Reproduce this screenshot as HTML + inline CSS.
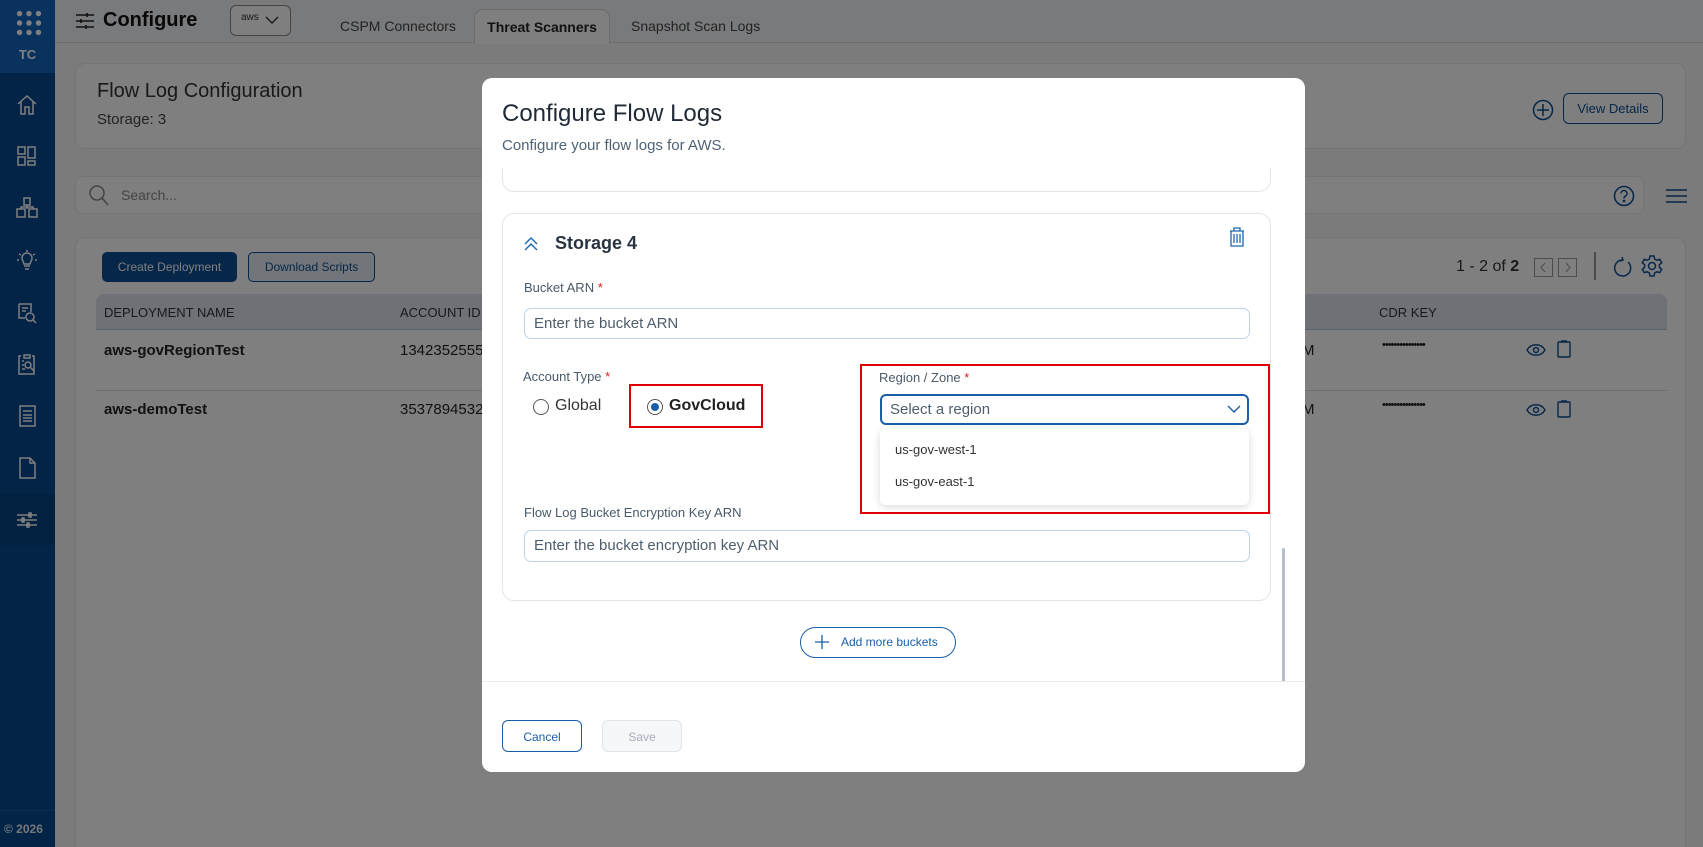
<!DOCTYPE html>
<html><head><meta charset="utf-8"><style>
*{box-sizing:border-box;margin:0;padding:0}
html,body{width:1703px;height:847px;overflow:hidden}
body{font-family:"Liberation Sans",Arial,sans-serif;background:#f6f7f9;position:relative;color:#222}
.abs{position:absolute}
.side{left:0;top:0;width:55px;height:847px;background:#06488f}
.side .top{position:absolute;left:0;top:0;width:55px;height:73px;background:#1464be}
.side .act{position:absolute;left:0;top:494px;width:55px;height:51px;background:#04407e}
.side .foot{position:absolute;left:0;top:810px;width:55px;height:37px;border-top:1px solid #1a5aa0;color:#e8eef6;font-size:12px;font-weight:bold;padding:11px 0 0 4px}
.ico{position:absolute;left:14px;width:26px;height:26px}
.topbar{left:55px;top:0;width:1648px;height:43px;background:#f3f5f8;border-bottom:1px solid #d8dde4}
.card{background:#fff;border:1px solid #e5e8ec;border-radius:10px}
.tab{position:absolute;top:9px;height:35px;font-size:14px;color:#444;padding-top:9px}
.btnp{position:absolute;border-radius:5px;font-size:12px;text-align:center}
.ov{left:0;top:0;width:1703px;height:847px;background:rgba(0,0,0,.5)}
.modal{left:482px;top:78px;width:823px;height:694px;background:#fff;border-radius:10px;overflow:hidden}
.lbl{position:absolute;font-size:13px;color:#4a5a6a}
.req{color:#d21;}
.inp{position:absolute;border:1px solid #bcd3ea;border-radius:7px;font-size:15px;color:#4f5d6c;padding:6px 0 0 9px}
</style></head><body>

<div class="abs side">
 <div class="top"></div>
 <svg class="ico" style="top:10px;left:16px" width="22" height="22" viewBox="0 0 22 22" fill="#fff"><circle cx="3" cy="3" r="2.3"/><circle cx="11" cy="3" r="2.3"/><circle cx="19" cy="3" r="2.3"/><circle cx="3" cy="11" r="2.3"/><circle cx="11" cy="11" r="2.3"/><circle cx="19" cy="11" r="2.3"/><circle cx="3" cy="19" r="2.3"/><circle cx="11" cy="19" r="2.3"/><circle cx="19" cy="19" r="2.3"/></svg>
 <div style="position:absolute;top:47px;left:0;width:55px;text-align:center;color:#fff;font-weight:bold;font-size:13px">TC</div>
 <div class="act"></div>
 <svg class="ico" style="top:92px" viewBox="0 0 26 26" fill="none" stroke="#fff" stroke-width="1.5"><path d="M4 12L13 4l9 8M7 10v12h4v-7h4v7h4V10"/></svg>
 <svg class="ico" style="top:143px" viewBox="0 0 26 26" fill="none" stroke="#fff" stroke-width="1.5"><rect x="4" y="4" width="7" height="7"/><rect x="4" y="14" width="7" height="8"/><rect x="14" y="4" width="7" height="11"/><rect x="14" y="18" width="7" height="4"/></svg>
 <svg class="ico" style="top:195px" viewBox="0 0 26 26" fill="none" stroke="#fff" stroke-width="1.5"><rect x="10" y="3" width="6" height="7"/><rect x="3" y="14" width="8" height="8"/><rect x="15" y="14" width="8" height="8"/><path d="M13 10v4M7 14v-2h12v2"/></svg>
 <svg class="ico" style="top:247px" viewBox="0 0 26 26" fill="none" stroke="#fff" stroke-width="1.5"><path d="M9 14a5 5 0 1 1 8 0l-1 3h-6zM10 19h6M11 22h4M13 3v2M5 7l2 1M21 7l-2 1M3 13h2M21 13h2"/></svg>
 <svg class="ico" style="top:300px" viewBox="0 0 26 26" fill="none" stroke="#fff" stroke-width="1.5"><path d="M5 4h12v8M5 4v14h6M8 8h6M8 11h4"/><circle cx="16" cy="17" r="4"/><path d="M19 20l3 3"/></svg>
 <svg class="ico" style="top:351px" viewBox="0 0 26 26" fill="none" stroke="#fff" stroke-width="1.5"><path d="M10 4h6v3h-6zM7 5H5v18h15V5h-2"/><circle cx="14" cy="14" r="3"/><path d="M16 16l4 4M8 10h2M8 14h2M8 18h3"/></svg>
 <svg class="ico" style="top:403px" viewBox="0 0 26 26" fill="none" stroke="#fff" stroke-width="1.5"><rect x="6" y="3" width="15" height="20"/><path d="M9 8h9M9 12h9M9 15h9M9 18h9"/></svg>
 <svg class="ico" style="top:455px" viewBox="0 0 26 26" fill="none" stroke="#fff" stroke-width="1.5"><path d="M6 3h10l5 5v15H6zM16 3v5h5"/></svg>
 <svg class="ico" style="top:507px" viewBox="0 0 26 26" fill="none" stroke="#fff" stroke-width="1.5"><path d="M3 8h20M3 13h20M3 18h20"/><rect x="15" y="6" width="2" height="4" fill="#fff"/><rect x="8" y="11" width="2" height="4" fill="#fff"/><rect x="13" y="16" width="2" height="4" fill="#fff"/></svg>
 <div class="foot">© 2026</div>
</div>

<div class="abs topbar">
 <svg style="position:absolute;left:20px;top:12px" width="20" height="18" viewBox="0 0 20 18" fill="none" stroke="#222" stroke-width="1.6"><path d="M1 3h18M1 9h18M1 15h18"/><path d="M12 1v4M6 7v4M11 13v4"/></svg>
 <div style="position:absolute;left:48px;top:9px;font-size:20px;font-weight:bold;color:#111">Configure</div>
 <div style="position:absolute;left:175px;top:5px;width:61px;height:31px;border:1px solid #888;border-radius:6px;background:#fff"><span style="position:absolute;left:10px;top:6px;font-size:10px;color:#333">aws</span><svg style="position:absolute;left:34px;top:9px" width="14" height="10" viewBox="0 0 14 10" fill="none" stroke="#333" stroke-width="1.4"><path d="M1 2l6 6 6-6"/></svg></div>
 <div class="tab" style="left:285px">CSPM Connectors</div>
 <div class="tab" style="left:419px;width:136px;background:#fff;border:1px solid #d5dae1;border-bottom:none;border-radius:9px 9px 0 0;text-align:center;font-weight:bold;color:#222">Threat Scanners</div>
 <div class="tab" style="left:576px">Snapshot Scan Logs</div>
</div>

<div class="abs card" style="left:75px;top:63px;width:1611px;height:86px">
 <div style="position:absolute;left:21px;top:16px;font-size:20px;color:#333">Flow Log Configuration</div>
 <div style="position:absolute;left:21px;top:47px;font-size:15px;color:#444">Storage: 3</div>
 <svg style="position:absolute;left:1456px;top:35px" width="22" height="22" viewBox="0 0 22 22" fill="none" stroke="#0d4f93" stroke-width="1.5"><circle cx="11" cy="11" r="9.5"/><path d="M11 5v12M5 11h12"/></svg>
 <div style="position:absolute;left:1487px;top:29px;width:100px;height:31px;border:1.5px solid #0d4f93;border-radius:6px;font-size:13px;color:#0d4f93;text-align:center;padding-top:7px">View Details</div>
</div>

<div class="abs card" style="left:75px;top:176px;width:1569px;height:38px;border-radius:8px">
 <svg style="position:absolute;left:13px;top:8px" width="20" height="22" viewBox="0 0 20 22" fill="none" stroke="#888" stroke-width="1.5"><circle cx="8" cy="8" r="7"/><path d="M13 13l6 7"/></svg>
 <div style="position:absolute;left:45px;top:10px;font-size:14px;color:#888">Search...</div>
 <svg style="position:absolute;left:1537px;top:8px" width="22" height="22" viewBox="0 0 22 22" fill="none" stroke="#0d4f93" stroke-width="1.5"><circle cx="11" cy="11" r="9.5"/><path d="M8 8.5a3 3 0 1 1 4 2.8c-1 .4-1 1.2-1 2.2"/><circle cx="11" cy="16" r=".6" fill="#0d4f93"/></svg>
</div>
<svg class="abs" style="left:1666px;top:189px" width="21" height="14" viewBox="0 0 21 14" stroke="#0d4f93" stroke-width="1.5"><path d="M0 1h21M0 7h21M0 13h21"/></svg>

<div class="abs card" style="left:75px;top:237px;width:1611px;height:630px">
 <div class="btnp" style="left:26px;top:14px;width:135px;height:30px;background:#0d4f93;color:#fff;padding-top:8px">Create Deployment</div>
 <div class="btnp" style="left:172px;top:14px;width:127px;height:30px;background:#e4eaf2;border:1px solid #0d4f93;color:#0d4f93;padding-top:7px">Download Scripts</div>
 <div style="position:absolute;left:1380px;top:20px;font-size:16px;color:#333">1 - 2 of <b>2</b></div>
 <svg style="position:absolute;left:1458px;top:20px" width="44" height="20" viewBox="0 0 44 20" fill="none" stroke="#999" stroke-width="1"><rect x=".5" y=".5" width="18" height="18"/><rect x="24.5" y=".5" width="18" height="18"/><path d="M11 5l-4 4.5 4 4.5M32 5l4 4.5-4 4.5"/></svg>
 <div style="position:absolute;left:1518px;top:14px;width:2px;height:28px;background:#999"></div>
 <svg style="position:absolute;left:1537px;top:18px" width="20" height="22" viewBox="0 0 20 22" fill="none" stroke="#0d4f93" stroke-width="1.5"><path d="M15 6a8 8 0 1 1-6-2M9 1l1 3-3 1"/></svg>
 <svg style="position:absolute;left:1565px;top:17px" width="22" height="22" viewBox="0 0 22 22" fill="none" stroke="#0d4f93" stroke-width="1.5"><circle cx="11" cy="11" r="3.5"/><path d="M9 1h4l.6 3 2.3 1.3 2.8-1 2 3.4-2.3 2v2.6l2.3 2-2 3.4-2.8-1-2.3 1.3L13 21H9l-.6-3-2.3-1.3-2.8 1-2-3.4 2.3-2V9.7L1.3 7.7l2-3.4 2.8 1L8.4 4z"/></svg>
 <div style="position:absolute;left:20px;top:56px;width:1571px;height:36px;background:#dce3ec;border-radius:8px 8px 0 0;border-bottom:1px solid #b9c6d5;font-size:13px;color:#333">
  <span style="position:absolute;left:8px;top:11px">DEPLOYMENT NAME</span><span style="position:absolute;left:304px;top:11px">ACCOUNT ID</span><span style="position:absolute;left:1283px;top:11px">CDR KEY</span>
 </div>
 <div style="position:absolute;left:20px;top:152px;width:1571px;height:1px;background:#ddd"></div>
 <div style="position:absolute;left:28px;top:104px;font-size:15px;font-weight:bold">aws-govRegionTest</div>
 <div style="position:absolute;left:324px;top:104px;font-size:15px">1342352555</div>
 <div style="position:absolute;left:28px;top:163px;font-size:15px;font-weight:bold">aws-demoTest</div>
 <div style="position:absolute;left:324px;top:163px;font-size:15px">3537894532</div>
 <div style="position:absolute;left:1226px;top:104px;font-size:15px">M</div>
 <div style="position:absolute;left:1226px;top:163px;font-size:15px">M</div>
 <div style="position:absolute;left:1306px;top:101px;font-size:11px;letter-spacing:-1px">•••••••••••••••</div>
 <div style="position:absolute;left:1306px;top:161px;font-size:11px;letter-spacing:-1px">•••••••••••••••</div>
 <svg style="position:absolute;left:1450px;top:105px" width="20" height="14" viewBox="0 0 20 14" fill="none" stroke="#0d4f93" stroke-width="1.4"><path d="M1 7c4-7 14-7 18 0-4 7-14 7-18 0z"/><circle cx="10" cy="7" r="2.5"/></svg>
 <svg style="position:absolute;left:1481px;top:102px" width="14" height="18" viewBox="0 0 14 18" fill="none" stroke="#0d4f93" stroke-width="1.4"><rect x="1" y="2" width="12" height="15" rx="1"/><path d="M4 1h6"/></svg>
 <svg style="position:absolute;left:1450px;top:165px" width="20" height="14" viewBox="0 0 20 14" fill="none" stroke="#0d4f93" stroke-width="1.4"><path d="M1 7c4-7 14-7 18 0-4 7-14 7-18 0z"/><circle cx="10" cy="7" r="2.5"/></svg>
 <svg style="position:absolute;left:1481px;top:162px" width="14" height="18" viewBox="0 0 14 18" fill="none" stroke="#0d4f93" stroke-width="1.4"><rect x="1" y="2" width="12" height="15" rx="1"/><path d="M4 1h6"/></svg>
</div>

<div class="abs ov"></div>

<div class="abs modal">
 <div style="position:absolute;left:20px;top:22px;font-size:24px;color:#1f2a36">Configure Flow Logs</div>
 <div style="position:absolute;left:20px;top:59px;font-size:15px;color:#4f6274">Configure your flow logs for AWS.</div>
 <div style="position:absolute;left:20px;top:90px;width:769px;height:24px;border:1px solid #e1e5ea;border-top:none;border-radius:0 0 12px 12px"></div>
 <div style="position:absolute;left:20px;top:135px;width:769px;height:388px;border:1px solid #e1e5ea;border-radius:12px">
  <svg style="position:absolute;left:20px;top:22px" width="16" height="16" viewBox="0 0 16 16" fill="none" stroke="#1a67b8" stroke-width="1.4"><path d="M2 8l6-6 6 6M2 14l6-6 6 6"/></svg>
  <div style="position:absolute;left:52px;top:19px;font-size:18px;font-weight:bold;color:#2a3440">Storage 4</div>
  <svg style="position:absolute;left:726px;top:13px" width="16" height="20" viewBox="0 0 16 20" fill="none" stroke="#1a67b8" stroke-width="1.3"><path d="M1 4h14M5 4V1h6v3M2 4v15h12V4M5 7v9M8 7v9M11 7v9"/></svg>
  <div class="lbl" style="left:21px;top:66px">Bucket ARN <span class="req">*</span></div>
  <div class="inp" style="left:21px;top:94px;width:726px;height:31px">Enter the bucket ARN</div>
  <div class="lbl" style="left:20px;top:155px">Account Type <span class="req">*</span></div>
  <div style="position:absolute;left:30px;top:185px;width:16px;height:16px;border:1.3px solid #555;border-radius:50%"></div>
  <div style="position:absolute;left:52px;top:183px;font-size:16px;color:#333">Global</div>
  <div style="position:absolute;left:126px;top:170px;width:134px;height:44px;border:2px solid #e00000"></div>
  <div style="position:absolute;left:144px;top:185px;width:16px;height:16px;border:1.3px solid #555;border-radius:50%"><div style="position:absolute;left:3px;top:3px;width:8px;height:8px;border-radius:50%;background:#1a5ea8"></div></div>
  <div style="position:absolute;left:166px;top:183px;font-size:16px;font-weight:bold;color:#222">GovCloud</div>
  <div class="lbl" style="left:21px;top:291px">Flow Log Bucket Encryption Key ARN</div>
  <div class="inp" style="left:21px;top:316px;width:726px;height:32px">Enter the bucket encryption key ARN</div>
 </div>
 <div style="position:absolute;left:378px;top:286px;width:410px;height:150px;border:2px solid #e00000"></div>
 <div class="lbl" style="left:397px;top:292px">Region / Zone <span class="req">*</span></div>
 <div style="position:absolute;left:398px;top:316px;width:369px;height:31px;border:2px solid #1a5ea8;border-radius:6px;font-size:15px;color:#4f5d6c;padding:5px 0 0 8px">Select a region
  <svg style="position:absolute;right:6px;top:9px" width="14" height="9" viewBox="0 0 14 9" fill="none" stroke="#1a5ea8" stroke-width="1.4"><path d="M1 1l6 6 6-6"/></svg></div>
 <div style="position:absolute;left:398px;top:351px;width:369px;height:76px;background:#fff;border-radius:6px;box-shadow:0 2px 8px rgba(0,0,0,.15);font-size:13px;color:#333">
  <div style="position:absolute;left:15px;top:13px">us-gov-west-1</div>
  <div style="position:absolute;left:15px;top:45px">us-gov-east-1</div>
 </div>
 <div style="position:absolute;left:800px;top:470px;width:3px;height:134px;background:#b6bec8;border-radius:2px"></div>
 <div style="position:absolute;left:318px;top:549px;width:156px;height:31px;border:1.5px solid #1a5ea8;border-radius:16px;font-size:12px;color:#1a5ea8;padding:7px 0 0 40px">
  <svg style="position:absolute;left:13px;top:6px" width="16" height="16" viewBox="0 0 16 16" stroke="#1a5ea8" stroke-width="1.3"><path d="M8 1v14M1 8h14"/></svg>Add more buckets</div>
 <div style="position:absolute;left:0;top:603px;width:823px;height:1px;background:#e8ebee;box-shadow:0 -2px 4px rgba(0,0,0,.04)"></div>
 <div style="position:absolute;left:20px;top:642px;width:80px;height:32px;border:1.5px solid #1a5ea8;border-radius:6px;font-size:12px;color:#1a5ea8;text-align:center;padding-top:9px">Cancel</div>
 <div style="position:absolute;left:120px;top:642px;width:80px;height:32px;border:1px solid #e1e5ea;background:#f6f7f9;border-radius:6px;font-size:12px;color:#aab;text-align:center;padding-top:9px">Save</div>
</div>
</body></html>
